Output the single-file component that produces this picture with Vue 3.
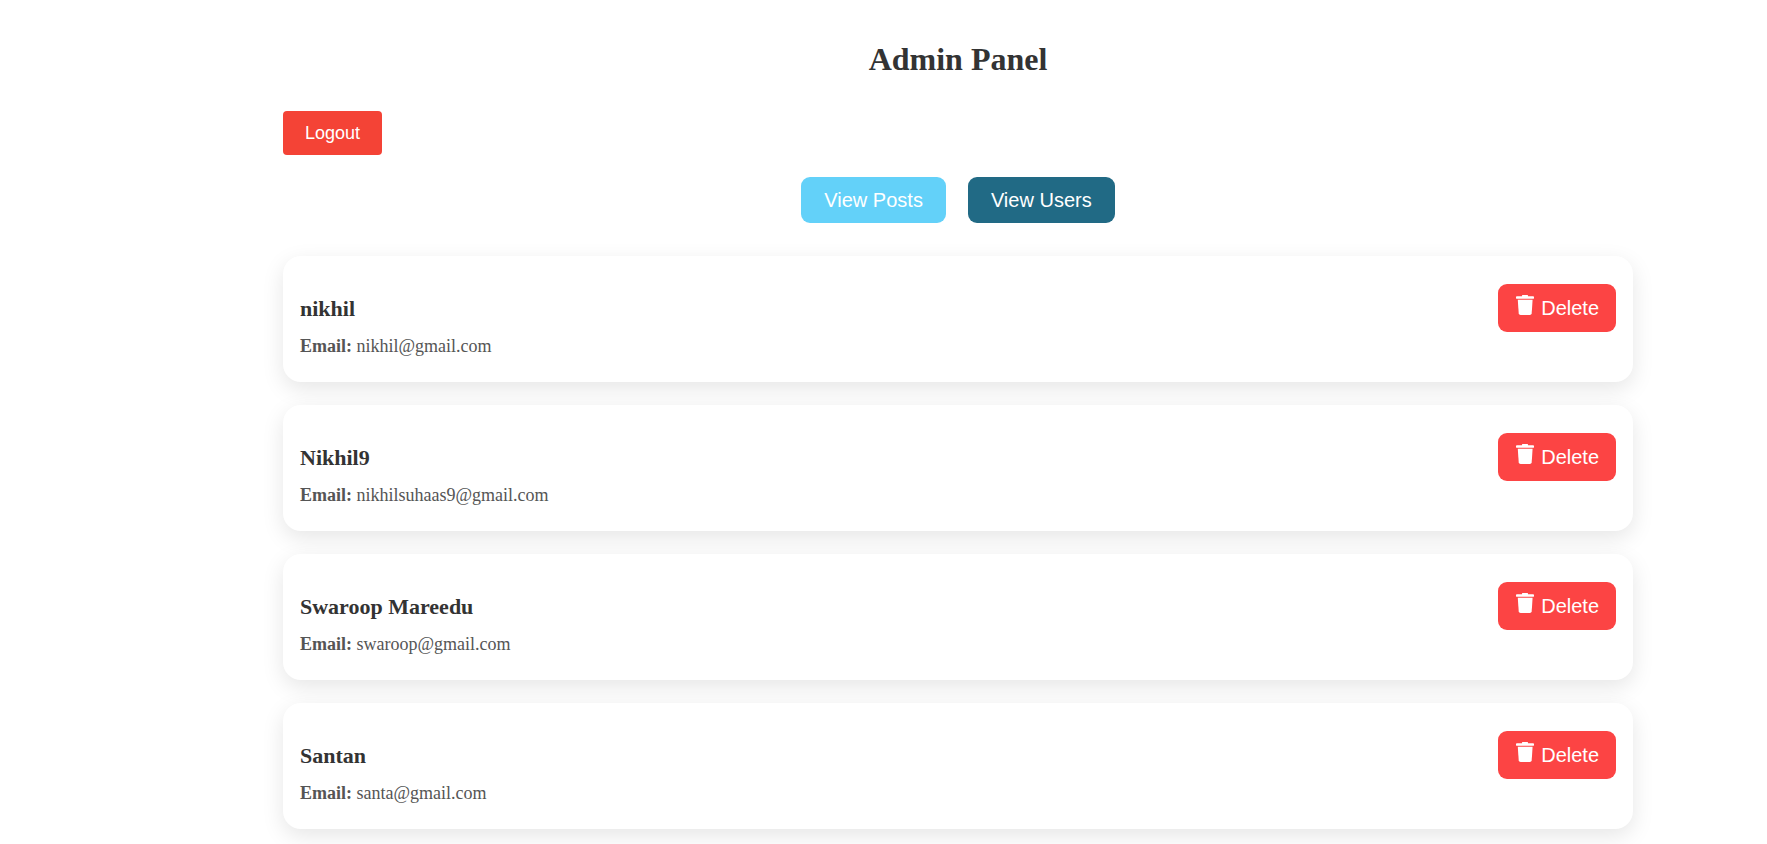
<script setup>
import { ref } from 'vue'

const view = ref('users')
const users = ref([
  { name: 'nikhil', email: 'nikhil@gmail.com' },
  { name: 'Nikhil9', email: 'nikhilsuhaas9@gmail.com' },
  { name: 'Swaroop Mareedu', email: 'swaroop@gmail.com' },
  { name: 'Santan', email: 'santa@gmail.com' }
])

function removeUser(user) {
  users.value = users.value.filter((u) => u !== user)
}
</script>

<template>
  <main class="admin">
    <h1 class="title">Admin Panel</h1>
    <button type="button" class="logout">Logout</button>
    <nav class="tabs">
      <button type="button" class="tab" :class="{ active: view === 'posts' }" @click="view = 'posts'">View Posts</button>
      <button type="button" class="tab" :class="{ active: view === 'users' }" @click="view = 'users'">View Users</button>
    </nav>
    <section v-if="view === 'users'" class="cards">
      <article v-for="user in users" :key="user.email" class="card">
        <div class="info">
          <h2 class="name">{{ user.name }}</h2>
          <p class="email"><strong>Email:</strong> {{ user.email }}</p>
        </div>
        <button type="button" class="delete" @click="removeUser(user)">
          <svg class="trash" viewBox="0 0 18 20" aria-hidden="true">
            <path d="M6.600 0h4.800q.6 0 .6.600v.6h5.100q.9 0 .9.900v.8q0 .9-.9.900H.9Q0 3.800 0 2.900v-.8q0-.9.9-.9H6V.6Q6 0 6.600 0z" />
            <path d="M1.800 4.800h14.800L15.700 18.300Q15.500 20 13.800 20H4.600Q2.900 20 2.700 18.300z" />
          </svg>
          <span>Delete</span>
        </button>
      </article>
    </section>
  </main>
</template>

<style>
body {
  margin: 0;
  background: #fff;
}
</style>

<style scoped>
.admin {
  display: flex;
  flex-direction: column;
  padding: 41px 134px 15px 283px;
  font-family: "Liberation Serif", "Times New Roman", serif;
  color: #333;
}

.title {
  margin: 0 0 34px;
  font-size: 32px;
  line-height: 36px;
  text-align: center;
}

button {
  border: 0;
  color: #fff;
  font-family: "Liberation Sans", Arial, sans-serif;
  cursor: pointer;
}

.logout {
  align-self: flex-start;
  padding: 11px 22px;
  border-radius: 4px;
  background: #f44336;
  font-size: 18px;
  line-height: 22px;
}

.tabs {
  display: flex;
  justify-content: center;
  gap: 22px;
  margin: 22px 0 33px;
}

.tab {
  padding: 11px 23px;
  border-radius: 9px;
  background: #63d1f9;
  font-size: 20px;
  line-height: 24px;
}

.tab.active {
  background: #216a85;
}

.cards {
  display: flex;
  flex-direction: column;
  gap: 23px;
}

.card {
  display: flex;
  justify-content: space-between;
  align-items: flex-start;
  padding: 28px 17px 25px;
  border-radius: 18px;
  background: #fff;
  box-shadow: 0 7px 22px rgba(0, 0, 0, 0.1);
}

.info {
  padding-top: 12px;
}

.name {
  margin: 0 0 13px;
  font-size: 22px;
  line-height: 26px;
}

.email {
  margin: 0;
  color: #555;
  font-size: 18px;
  line-height: 22px;
}

.delete {
  display: flex;
  align-items: flex-start;
  gap: 7px;
  padding: 11px 17px 11px 18px;
  border-radius: 9px;
  background: #fc4444;
  font-size: 20px;
  line-height: 26px;
}

.trash {
  width: 18px;
  height: 20px;
  fill: currentColor;
}
</style>
